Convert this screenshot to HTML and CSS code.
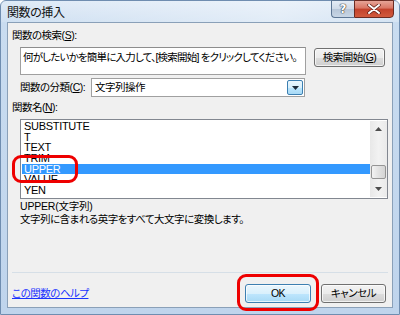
FILE: index.html
```html
<!DOCTYPE html>
<html lang="ja">
<head>
<meta charset="utf-8">
<link rel="stylesheet" href="styles.css">
</head>
<body>
<div class="window">
  <div class="titlebar">
    <span class="title">関数の挿入</span>
    <div class="caption-btns">
      <span class="cbtn help">?</span>
      <span class="cbtn close"><svg width="14" height="10" viewBox="0 0 14 10"><path d="M2 1 L12 9 M12 1 L2 9" stroke="#5a1a12" stroke-width="3.4" stroke-linecap="round"/><path d="M2 1 L12 9 M12 1 L2 9" stroke="#ffffff" stroke-width="2" stroke-linecap="round"/></svg></span>
    </div>
  </div>
  <div class="client">
    <div class="label l-search">関数の検索(<u>S</u>):</div>
    <div class="search-row">
      <div class="textbox">何がしたいかを簡単に入力して、[検索開始] をクリックしてください。</div>
      <button class="btn search-btn">検索開始(<u>G</u>)</button>
    </div>
    <div class="cat-row">
      <span class="label">関数の分類(<u>C</u>):</span>
      <div class="select">
        <span class="sel-text">文字列操作</span>
        <span class="drop"><svg width="7" height="4" viewBox="0 0 7 4"><path d="M0 0 H7 L3.5 4 Z" fill="#1c2b3a"/></svg></span>
      </div>
    </div>
    <div class="label l-name">関数名(<u>N</u>):</div>
    <div class="listbox">
      <ul class="items">
        <li>SUBSTITUTE</li>
        <li>T</li>
        <li>TEXT</li>
        <li>TRIM</li>
        <li class="selected">UPPER</li>
        <li>VALUE</li>
        <li>YEN</li>
      </ul>
      <div class="scrollbar">
        <span class="arrow"><svg width="7" height="4" viewBox="0 0 7 4"><path d="M0 4 H7 L3.5 0 Z" fill="#4d4d4d"/></svg></span>
        <span class="track"><span class="thumb"></span></span>
        <span class="arrow"><svg width="7" height="4" viewBox="0 0 7 4"><path d="M0 0 H7 L3.5 4 Z" fill="#4d4d4d"/></svg></span>
      </div>
    </div>
    <div class="syntax">UPPER(文字列)</div>
    <div class="desc">文字列に含まれる英字をすべて大文字に変換します。</div>
    <div class="sep"></div>
    <div class="footer">
      <a class="help-link" href="#">この関数のヘルプ</a>
      <div class="btns">
        <button class="btn ok">OK</button>
        <button class="btn cancel">キャンセル</button>
      </div>
    </div>
    <div class="mark mark-upper"></div>
    <div class="mark mark-ok"></div>
  </div>
</div>
</body>
</html>
```

FILE: styles.css
```css
* { box-sizing: border-box; }
html, body { margin: 0; padding: 0; }
body {
  width: 400px;
  height: 315px;
  overflow: hidden;
  font-family: "Liberation Sans", "Noto Sans CJK JP", sans-serif;
  font-size: 10.5px;
  letter-spacing: -0.5px;
  font-feature-settings: "palt";
  color: #000;
}
.window {
  width: 400px;
  height: 315px;
  background: linear-gradient(to bottom, #dbe8f6 0px, #c9dcf0 22px, #bfd4ec 100%);
  border: 1px solid #6f8db0;
  border-radius: 6px 6px 0 0;
  display: flex;
  flex-direction: column;
}
.titlebar {
  height: 21px;
  display: flex;
  align-items: flex-start;
  justify-content: space-between;
  background: linear-gradient(to right, rgba(255,255,255,0.1), rgba(255,255,255,0.45) 70%, rgba(255,255,255,0.2));
}
.title {
  margin: 3px 0 0 6px;
  font-size: 12px;
  letter-spacing: -0.4px;
  line-height: 15px;
  color: #111;
  font-family: "Noto Sans CJK JP", sans-serif;
}
.caption-btns {
  display: flex;
  margin-right: 5px;
  margin-top: -1px;
}
.cbtn {
  height: 18px;
  display: flex;
  align-items: center;
  justify-content: center;
  border: 1px solid #5d7694;
}
.help {
  width: 23px;
  border-radius: 0 0 0 4px;
  border-right: none;
  background: linear-gradient(to bottom, #e4ecf5 0%, #cfdae7 50%, #b7c6d8 51%, #c8d6e6 100%);
  color: #fff;
  font-family: "DejaVu Sans", sans-serif;
  font-weight: bold;
  font-size: 12px;
  letter-spacing: 0;
  text-shadow: 0 0 1px #333, 0 0 1px #333, 0 0 1px #333;
}
.close {
  width: 40px;
  border-radius: 0 0 4px 0;
  border-color: #6b2b22;
  background: linear-gradient(to bottom, #e6a497 0%, #d97563 45%, #c2412b 50%, #d15a3d 100%);
}
.client {
  position: relative;
  margin: 0 6px 6px 6px;
  flex: 1;
  background: #f0f0f0;
  border: 1px solid #8aa0b8;
  display: flex;
  flex-direction: column;
}
.label {
  line-height: 13px;
  white-space: nowrap;
}
.label u, .btn u { text-decoration: underline; }
.l-search { margin: 6px 0 0 4px; }
.search-row {
  display: flex;
  align-items: flex-start;
  margin-top: 5px;
}
.textbox {
  margin-left: 12px;
  width: 286px;
  height: 28px;
  background: #fff;
  border: 1px solid #a0a0a0;
  border-top-color: #8d8d8d;
  padding: 3px 0 0 2px;
  line-height: 13px;
  white-space: nowrap;
  overflow: hidden;
  letter-spacing: -0.8px;
}
.btn {
  font-family: "Liberation Sans", "Noto Sans CJK JP", sans-serif;
  font-size: 10.5px;
  letter-spacing: -0.5px;
  font-feature-settings: "palt";
  color: #000;
  height: 19px;
  padding: 0;
  border: 1px solid #707070;
  border-radius: 3px;
  background: linear-gradient(to bottom, #f2f2f2 0%, #ebebeb 50%, #dddddd 51%, #cfcfcf 100%);
  box-shadow: inset 0 0 0 1px rgba(255,255,255,0.7);
  line-height: 15px;
  white-space: nowrap;
}
.search-btn {
  margin: 1px 0 0 8px;
  width: 71px;
}
.cat-row {
  display: flex;
  align-items: center;
  margin-top: 3px;
  height: 19px;
}
.cat-row .label { margin-left: 12px; width: 71px; }
.select {
  width: 214px;
  height: 19px;
  background: #fff;
  border: 1px solid #a0a0a0;
  display: flex;
  align-items: center;
  justify-content: space-between;
  padding: 0 0 0 3px;
}
.sel-text { line-height: 13px; }
.drop {
  width: 16px;
  height: 15px;
  margin-right: 1px;
  border: 1px solid #3c7fb1;
  border-radius: 2px;
  background: linear-gradient(to bottom, #eaf6fd 0%, #d9f0fc 50%, #bee6fd 51%, #a7d9f5 100%);
  display: flex;
  align-items: center;
  justify-content: center;
}
.l-name { margin: 4px 0 0 4px; }
.listbox {
  margin: 5px 0 0 12px;
  width: 368px;
  height: 80px;
  background: #fff;
  border: 1px solid #828790;
  display: flex;
  padding: 1px 0 1px 1px;
}
.items {
  list-style: none;
  margin: 0;
  padding: 0;
  flex: 1;
}
.items li {
  height: 10.7px;
  line-height: 11px;
  padding-left: 2px;
  font-size: 11px;
  letter-spacing: -0.3px;
  color: #000;
}
.items li.selected {
  background: #3399ff;
  color: #fff;
}
.scrollbar {
  width: 17px;
  display: flex;
  flex-direction: column;
  background: linear-gradient(to right, #e8e8e8, #f2f2f2 50%, #eaeaea);
}
.arrow {
  height: 16px;
  display: flex;
  align-items: center;
  justify-content: center;
}
.track {
  flex: 1;
  display: flex;
  flex-direction: column;
  justify-content: flex-end;
  padding: 0 1px 2px 1px;
}
.thumb {
  height: 14px;
  border: 1px solid #959595;
  border-radius: 2px;
  background: linear-gradient(to right, #f3f3f3, #e2e2e2 50%, #d4d4d4);
}
.syntax { margin: 1px 0 0 12px; line-height: 13px; letter-spacing: -0.2px; }
.desc { margin: 0 0 0 12px; line-height: 13px; }
.sep {
  margin: 46px 4px 0 4px;
  height: 1px;
  background: #d6dfe7;
}
.footer {
  display: flex;
  justify-content: space-between;
  align-items: flex-start;
  margin-top: 11px;
}
.help-link {
  margin: 2px 0 0 4px;
  color: #1a33ff;
  text-decoration: underline;
  line-height: 14px;
  font-family: "Noto Sans CJK JP", sans-serif;
}
.btns {
  display: flex;
  gap: 10px;
  margin-right: 6px;
}
.ok {
  width: 66px;
  border-color: #3c7fb1;
  background: linear-gradient(to bottom, #eaf6fd 0%, #d9f0fc 50%, #bee6fd 51%, #a7d9f5 100%);
}
.cancel { width: 65px; }
.mark {
  position: absolute;
  border: 3px solid #ee0000;
  border-radius: 9px;
}
.mark-upper {
  left: 4px;
  top: 132px;
  width: 66px;
  height: 28px;
}
.mark-ok {
  left: 229px;
  top: 251px;
  width: 82px;
  height: 37px;
}
```
